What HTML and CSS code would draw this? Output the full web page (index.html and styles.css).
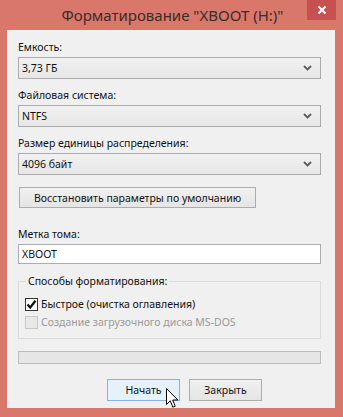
FILE: index.html
```html
<!DOCTYPE html>
<html lang="ru">
<head>
  <meta charset="UTF-8">
  <meta name="viewport" content="width=device-width, initial-scale=1.0">
  <title>Форматирование</title>
  <link rel="stylesheet" href="styles.css">
</head>
<body>

  <div class="titlebar">
    <span class="title">Форматирование "XBOOT (H:)"</span>
    <div class="close">
      <svg width="10" height="10" viewBox="0 0 10 10"><path d="M1.5 1.5 L8.5 8.5 M8.5 1.5 L1.5 8.5" stroke="#fff" stroke-width="2"/></svg>
    </div>
  </div>

  <div class="client">
    <div class="label first">Емкость:</div>
    <div class="select">
      <span>3,73 ГБ</span>
      <svg class="chev" width="9" height="6" viewBox="0 0 9 6"><path d="M1 1 L4.5 4.5 L8 1" fill="none" stroke="#5a5a5a" stroke-width="1.8"/></svg>
    </div>

    <div class="label">Файловая система:</div>
    <div class="select">
      <span>NTFS</span>
      <svg class="chev" width="9" height="6" viewBox="0 0 9 6"><path d="M1 1 L4.5 4.5 L8 1" fill="none" stroke="#5a5a5a" stroke-width="1.8"/></svg>
    </div>

    <div class="label">Размер единицы распределения:</div>
    <div class="select">
      <span>4096 байт</span>
      <svg class="chev" width="9" height="6" viewBox="0 0 9 6"><path d="M1 1 L4.5 4.5 L8 1" fill="none" stroke="#5a5a5a" stroke-width="1.8"/></svg>
    </div>

    <div class="btn restore">Восстановить параметры по умолчанию</div>

    <div class="label volume">Метка тома:</div>
    <div class="textbox">XBOOT</div>

    <fieldset class="group">
      <legend>Способы форматирования:</legend>
      <div class="check-row">
        <span class="box">
          <svg width="11" height="11" viewBox="0 0 11 11"><path d="M1.5 5.5 L4.2 8.5 L9.5 1.8" fill="none" stroke="#111" stroke-width="2.2"/></svg>
        </span>
        <span>Быстрое (очистка оглавления)</span>
      </div>
      <div class="check-row disabled">
        <span class="box"></span>
        <span>Создание загрузочного диска MS-DOS</span>
      </div>
    </fieldset>

    <div class="progress"></div>

    <div class="actions">
      <div class="btn hover">Начать</div>
      <div class="btn">Закрыть</div>
    </div>
  </div>

  <svg class="cursor" width="13" height="21" viewBox="0 0 13 21">
    <path d="M0.5 0.5 L0.5 16.5 L4.3 12.8 L6.8 19.2 L9.2 18.2 L6.7 12 L11.8 12 Z" fill="#fff" stroke="#000" stroke-width="1"/>
  </svg>

</body>
</html>
```

FILE: styles.css
```css
body {
  margin: 0;
  background: #d9776b;
  font-family: "Noto Sans", "Open Sans", sans-serif;
  font-size: 10.5px;
  color: #111;
  width: 343px;
  height: 417px;
  overflow: hidden;
  position: relative;
}
.titlebar {
  height: 30px;
  display: flex;
  justify-content: center;
  align-items: center;
  position: relative;
}
.title {
  font-size: 15px;
  color: #3d2b28;
  margin-left: 2px;
  margin-top: -1px;
}
.close {
  position: absolute;
  right: 7px;
  top: 0;
  width: 29px;
  height: 20px;
  background: #c75050;
  display: flex;
  align-items: center;
  justify-content: center;
}
.client {
  margin: 0 8px 0 7px;
  height: 378px;
  background: #f0f0f0;
  padding: 9px 14px 0 11px;
  box-sizing: border-box;
}
.label {
  line-height: 16px;
  height: 16px;
  margin-top: 8px;
}
.label.first {
  margin-top: 0;
}
.label.volume {
  margin-top: 18px;
}
.select {
  margin-top: 2px;
  height: 22px;
  box-sizing: border-box;
  border: 1px solid #acacac;
  background: linear-gradient(#f2f2f2, #e6e6e6);
  display: flex;
  align-items: center;
  justify-content: space-between;
  padding: 0 8px 0 3px;
}
.btn {
  height: 21px;
  box-sizing: border-box;
  border: 1px solid #acacac;
  background: linear-gradient(#f0f0f0, #e5e5e5);
  display: flex;
  align-items: center;
  justify-content: center;
}
.restore {
  margin-top: 12px;
  margin-left: 1px;
  width: 237px;
}
.textbox {
  margin-top: 2px;
  height: 20px;
  box-sizing: border-box;
  border: 1px solid #abadb3;
  background: #fff;
  padding: 0 3px;
  display: flex;
  align-items: center;
}
.group {
  margin: 9px 0 0 0;
  padding: 0 6px 7px 6px;
  border: 1px solid #dcdcdc;
  min-width: 0;
}
.group legend {
  padding: 0 2px;
  margin-left: 1px;
  line-height: 16px;
}
.check-row {
  display: flex;
  align-items: center;
  height: 18px;
  margin-top: 0;
}
.check-row:first-of-type {
  margin-top: 6px;
}
.box {
  width: 13px;
  height: 13px;
  box-sizing: border-box;
  border: 1px solid #333;
  background: #fff;
  margin-right: 3px;
  display: flex;
  align-items: center;
  justify-content: center;
}
.disabled {
  color: #9a9a9a;
}
.disabled .box {
  border-color: #c8c8c8;
  background: #e8e8e8;
}
.progress {
  margin-top: 12px;
  height: 13px;
  box-sizing: border-box;
  border: 1px solid #bcbcbc;
  background: #e6e6e6;
}
.actions {
  display: flex;
  gap: 9px;
  margin-top: 15px;
  padding-left: 89px;
}
.actions .btn {
  width: 73px;
  height: 22px;
}
.btn.hover {
  background: #e5f1fb;
  border-color: #7eb4ea;
}
.cursor {
  position: absolute;
  left: 166px;
  top: 388px;
}
```
